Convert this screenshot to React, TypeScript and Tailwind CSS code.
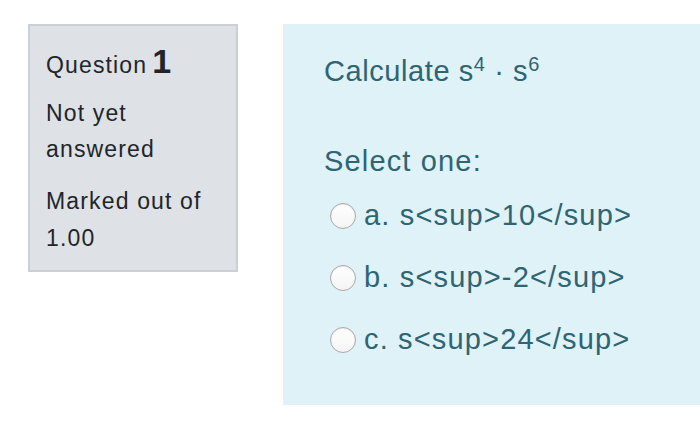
import React from 'react';

const options = [
  { letter: 'a.', text: 's<sup>10</sup>' },
  { letter: 'b.', text: 's<sup>-2</sup>' },
  { letter: 'c.', text: 's<sup>24</sup>' },
];

const Radio: React.FC = () => (
  <span className="block h-[26px] w-[26px] shrink-0 rounded-full border border-[#a9a9a9] bg-gradient-to-b from-[#ffffff] to-[#f4f4f4] shadow-[inset_0_1px_1px_rgba(0,0,0,0.08)]" />
);

export default function App() {
  return (
    <div
      className="flex min-h-[434px] w-full items-start bg-white pl-[28px] pt-[24px]"
      style={{ fontFamily: '"Liberation Sans", Arial, sans-serif' }}
    >
      {/* question info */}
      <div className="w-[210px] shrink-0 border-2 border-[#cbd0d6] bg-[#dee2e6] pb-[13px] pl-[16px] pr-1 pt-[17px] text-[23px] tracking-[0.05em] text-[#212529]">
        <div className="flex h-[36px] items-baseline overflow-visible leading-[36px]">
          <span>Question</span>
          <span className="ml-[5px] text-[34px] font-bold leading-[36px]">1</span>
        </div>
        <div className="mt-[16px] leading-[36px]">
          Not yet
          <br />
          answered
        </div>
        <div className="mt-[16px] leading-[37px]">
          Marked out of
          <br />
          1.00
        </div>
      </div>

      {/* question body */}
      <div className="ml-[45px] flex-1 bg-[#def2f8] pb-[34px] pl-[41px] pt-[27px] text-[29px] tracking-[0.04em] text-[#2f6473]">
        <div className="leading-[40px] tracking-[0.02em]">
          Calculate s<sup className="text-[20px]">4</sup> · s<sup className="text-[20px]">6</sup>
        </div>
        <div className="mt-[50px] leading-[40px]">Select one:</div>
        <div className="mt-[4px] flex flex-col">
          {options.map((o) => (
            <label key={o.letter} className="flex h-[62px] items-center gap-[8px] pl-[6px]">
              <Radio />
              <span>
                {o.letter} {o.text}
              </span>
            </label>
          ))}
        </div>
      </div>
    </div>
  );
}
